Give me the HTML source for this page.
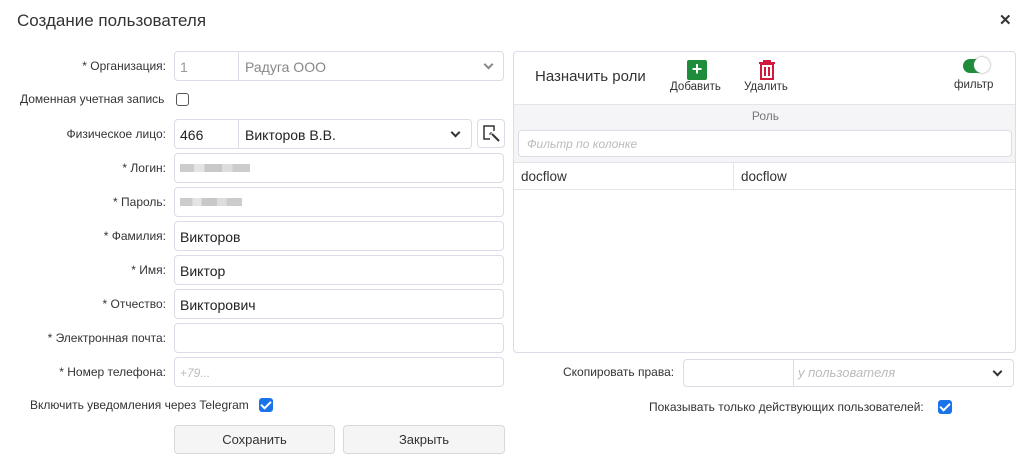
<!DOCTYPE html>
<html><head><meta charset="utf-8"><style>
*{box-sizing:border-box;margin:0;padding:0}
body{width:1020px;height:459px;background:#fff;font-family:"Liberation Sans",sans-serif;color:#333;position:relative;overflow:hidden}
.a{position:absolute}
.lbl{position:absolute;right:854px;font-size:12px;color:#333;white-space:nowrap}
.in{position:absolute;left:174px;width:330px;height:30px;border:1px solid #dcdce6;border-radius:4px;font-size:14px;color:#222;padding:7px 5px}
.cb{position:absolute;width:13px;height:13px;border:1px solid #555;border-radius:3px}
.cbc{position:absolute;width:14px;height:14px;background:#1a73e8;border-radius:3px}
.cbc:after{content:"";position:absolute;left:4px;top:1px;width:4px;height:8px;border:solid #fff;border-width:0 2px 2px 0;transform:rotate(45deg)}
.blur{position:absolute;height:8px;background:linear-gradient(90deg,#ccc 0 20%,#e4e4e4 20% 35%,#c8c8c8 35% 60%,#ddd 60% 75%,#ccc 75%)}
.btn{position:absolute;top:425px;height:29px;border:1px solid #d8d8d8;border-radius:4px;background:#f5f5f5;font-size:13px;text-align:center;line-height:27px;color:#333}
.chev{position:absolute;width:7px;height:7px;border:solid #333;border-width:0 2px 2px 0;transform:rotate(45deg)}
</style></head><body>
<div class="a" style="left:17px;top:11px;font-size:17px;color:#333">Создание пользователя</div>
<div class="a" style="left:999px;top:11px;font-size:15px;font-weight:bold;color:#333">✕</div>

<div class="lbl" style="top:59px">* Организация:</div>
<div class="in" style="top:51px;color:#999;padding:0">
 <span class="a" style="left:5px;top:7px">1</span>
 <div class="a" style="left:63px;top:0;bottom:0;border-left:1px solid #dcdce6"></div>
 <span class="a" style="left:70px;top:7px;color:#888">Радуга ООО</span>
 <div class="chev" style="left:310px;top:9px;border-color:#888"></div>
</div>
<div class="lbl" style="left:20px;right:auto;top:92px">Доменная учетная запись</div>
<div class="cb" style="left:176px;top:93px"></div>

<div class="lbl" style="top:127px">Физическое лицо:</div>
<div class="in" style="top:119px;width:298px;padding:0">
 <span class="a" style="left:5px;top:7px">466</span>
 <div class="a" style="left:63px;top:0;bottom:0;border-left:1px solid #dcdce6"></div>
 <span class="a" style="left:70px;top:7px">Викторов В.В.</span>
 <div class="chev" style="left:277px;top:9px"></div>
</div>
<div class="a" style="left:477px;top:119px;width:28px;height:29px;border:1px solid #dcdce6;border-radius:4px">
<svg width="26" height="27" viewBox="0 0 26 27"><path d="M12 19H6V6h10v5" fill="none" stroke="#333" stroke-width="1.5"/><path d="M14 14l7 7" stroke="#333" stroke-width="2"/><path d="M13 12v2M11 14h2" stroke="#333" stroke-width="1"/></svg></div>

<div class="lbl" style="top:161px">* Логин:</div>
<div class="in" style="top:153px"><div class="blur" style="left:5px;top:10px;width:70px"></div></div>
<div class="lbl" style="top:195px">* Пароль:</div>
<div class="in" style="top:187px"><div class="blur" style="left:5px;top:10px;width:62px"></div></div>
<div class="lbl" style="top:229px">* Фамилия:</div>
<div class="in" style="top:221px">Викторов</div>
<div class="lbl" style="top:263px">* Имя:</div>
<div class="in" style="top:255px">Виктор</div>
<div class="lbl" style="top:297px">* Отчество:</div>
<div class="in" style="top:289px">Викторович</div>
<div class="lbl" style="top:331px">* Электронная почта:</div>
<div class="in" style="top:323px"></div>
<div class="lbl" style="top:365px">* Номер телефона:</div>
<div class="in" style="top:357px;color:#bbb;font-style:italic;font-size:12px;padding-top:8px">+79...</div>
<div class="lbl" style="left:30px;right:auto;top:398px">Включить уведомления через Telegram</div>
<div class="cbc" style="left:259px;top:398px"></div>
<div class="btn" style="left:174px;width:161px">Сохранить</div>
<div class="btn" style="left:343px;width:162px">Закрыть</div>

<div class="a" style="left:513px;top:51px;width:503px;height:302px;border:1px solid #dcdce6;border-radius:4px;overflow:hidden">
 <div class="a" style="left:21px;top:16px;font-size:15px;color:#333">Назначить роли</div>
 <div class="a" style="left:173px;top:8px;width:20px;height:20px;background:#1e8c3a;border-radius:2px;color:#fff;font-size:18px;line-height:19px;text-align:center;font-weight:bold">+</div>
 <div class="a" style="left:156px;top:29px;font-size:11.5px">Добавить</div>
 <svg class="a" style="left:244px;top:8px" width="18" height="20" viewBox="0 0 18 20"><path d="M1 3h16M6 3V1h6v2M3 4h12v15H3z" fill="none" stroke="#d0193b" stroke-width="2"/><path d="M7 7v9M11 7v9" stroke="#d0193b" stroke-width="2"/></svg>
 <div class="a" style="left:230px;top:29px;font-size:11.5px">Удалить</div>
 <div class="a" style="left:449px;top:7px;width:24px;height:14px;background:#1e8c3a;border-radius:7px"></div>
 <div class="a" style="left:460px;top:5px;width:16px;height:16px;background:#fff;border-radius:50%;box-shadow:0 0 2px #888"></div>
 <div class="a" style="left:440px;top:27px;font-size:11.5px">фильтр</div>
 <div class="a" style="left:0;top:52px;width:503px;height:26px;background:#f5f5f7;border-top:1px solid #e4e4ea"></div>
 <div class="a" style="left:0;top:57px;width:503px;text-align:center;font-size:12px;color:#777">Роль</div>
 <div class="a" style="left:0;top:78px;width:503px;height:32px;background:#f5f5f7"></div>
 <div class="a" style="left:4px;top:78px;width:494px;height:27px;background:#fff;border:1px solid #dcdce6;border-radius:4px;font-size:12px;color:#bbb;font-style:italic;padding:6px 8px">Фильтр по колонке</div>
 <div class="a" style="left:0;top:110px;width:503px;height:28px;border-top:1px solid #e4e4ea;border-bottom:1px solid #e4e4ea"></div>
 <div class="a" style="left:219px;top:110px;height:28px;border-left:1px solid #e4e4ea"></div>
 <div class="a" style="left:7px;top:117px;font-size:13.5px">docflow</div>
 <div class="a" style="left:227px;top:117px;font-size:13.5px">docflow</div>
</div>

<div class="a" style="left:563px;top:365px;font-size:12px">Скопировать права:</div>
<div class="a" style="left:683px;top:359px;width:331px;height:28px;border:1px solid #dcdce6;border-radius:4px">
 <div class="a" style="left:109px;top:0;bottom:0;border-left:1px solid #dcdce6"></div>
 <span class="a" style="left:114px;top:5px;font-size:13px;color:#bbb;font-style:italic">у пользователя</span>
 <div class="chev" style="left:310px;top:8px"></div>
</div>
<div class="a" style="left:649px;top:400px;font-size:12px">Показывать только действующих пользователей:</div>
<div class="cbc" style="left:938px;top:400px"></div>
</body></html>
